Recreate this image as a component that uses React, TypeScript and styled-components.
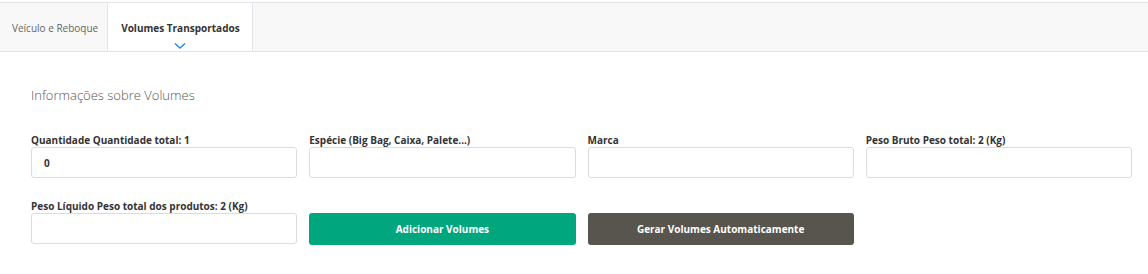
import styled, { createGlobalStyle } from "styled-components";

const GlobalStyle = createGlobalStyle`
  body {
    margin: 0;
    background: #ffffff;
    font-family: "Open Sans", "Liberation Sans", sans-serif;
  }
`;

export default function App() {
  return (
    <>
      <GlobalStyle />
      <Page>
        <TabBar>
          <Tab>Veículo e Reboque</Tab>
          <Tab $active>
            Volumes Transportados
            <Chevron width="12" height="8" viewBox="0 0 12 8">
              <path d="M1 1.5 L6 6 L11 1.5" fill="none" stroke="#2a8de0" strokeWidth="1.6" />
            </Chevron>
          </Tab>
        </TabBar>
        <Content>
          <SectionTitle>Informações sobre Volumes</SectionTitle>
          <FormGrid>
            <Field>
              <Label>Quantidade Quantidade total: 1</Label>
              <Input defaultValue="0" />
            </Field>
            <Field>
              <Label>Espécie (Big Bag, Caixa, Palete...)</Label>
              <Input />
            </Field>
            <Field>
              <Label>Marca</Label>
              <Input />
            </Field>
            <Field>
              <Label>Peso Bruto Peso total: 2 (Kg)</Label>
              <Input />
            </Field>
            <Field>
              <Label>Peso Líquido Peso total dos produtos: 2 (Kg)</Label>
              <Input />
            </Field>
            <Field>
              <Button $variant="primary">Adicionar Volumes</Button>
            </Field>
            <Field>
              <Button $variant="dark">Gerar Volumes Automaticamente</Button>
            </Field>
          </FormGrid>
        </Content>
      </Page>
    </>
  );
}

const Page = styled.div`
  width: 1148px;
  height: 274px;
  padding-top: 2px;
  box-sizing: border-box;
`;

const TabBar = styled.div`
  display: flex;
  height: 50px;
  background: #f8f8f8;
  border-top: 1px solid #e1e4e8;
  border-bottom: 1px solid #e1e4e8;
  box-sizing: border-box;
`;

const Tab = styled.div<{ $active?: boolean }>`
  position: relative;
  display: flex;
  align-items: center;
  white-space: nowrap;
  height: 48px;
  box-sizing: border-box;
  padding: ${(p) => (p.$active ? "1px 12px 0 13px" : "1px 9px 0 12px")};
  font-size: 10px;
  color: ${(p) => (p.$active ? "#333333" : "#666666")};
  font-weight: ${(p) => (p.$active ? 700 : 400)};
  background: ${(p) => (p.$active ? "#ffffff" : "transparent")};
  border-left: ${(p) => (p.$active ? "1px solid #e1e4e8" : "none")};
  border-right: ${(p) => (p.$active ? "1px solid #e1e4e8" : "none")};
`;

const Chevron = styled.svg`
  position: absolute;
  left: 66px;
  bottom: 1px;
`;

const Content = styled.div`
  padding: 34px 16px 0 31px;
`;

const SectionTitle = styled.h2`
  margin: 0 0 30px;
  height: 18px;
  line-height: 18px;
  font-size: 13px;
  font-weight: 300;
  color: #555555;
`;

const FormGrid = styled.div`
  display: grid;
  grid-template-columns: repeat(4, 1fr);
  column-gap: 12px;
  row-gap: 22px;
  align-items: end;
`;

const Field = styled.div`
  display: flex;
  flex-direction: column;
`;

const Label = styled.label`
  font-size: 10px;
  font-weight: 700;
  color: #333333;
  line-height: 13px;
  white-space: nowrap;
`;

const Input = styled.input`
  height: 31px;
  box-sizing: border-box;
  border: 1px solid #dcdcdc;
  border-radius: 3px;
  padding: 0 12px;
  font-family: "Open Sans", "Liberation Sans", sans-serif;
  font-size: 10px;
  font-weight: 700;
  color: #333333;
  outline: none;
`;

const Button = styled.button<{ $variant: "primary" | "dark" }>`
  height: 32px;
  margin-bottom: -1px;
  border: none;
  border-radius: 3px;
  background: ${(p) => (p.$variant === "primary" ? "#00a77e" : "#57554d")};
  color: #ffffff;
  font-family: "Open Sans", "Liberation Sans", sans-serif;
  font-size: 10px;
  font-weight: 700;
  cursor: pointer;
`;
